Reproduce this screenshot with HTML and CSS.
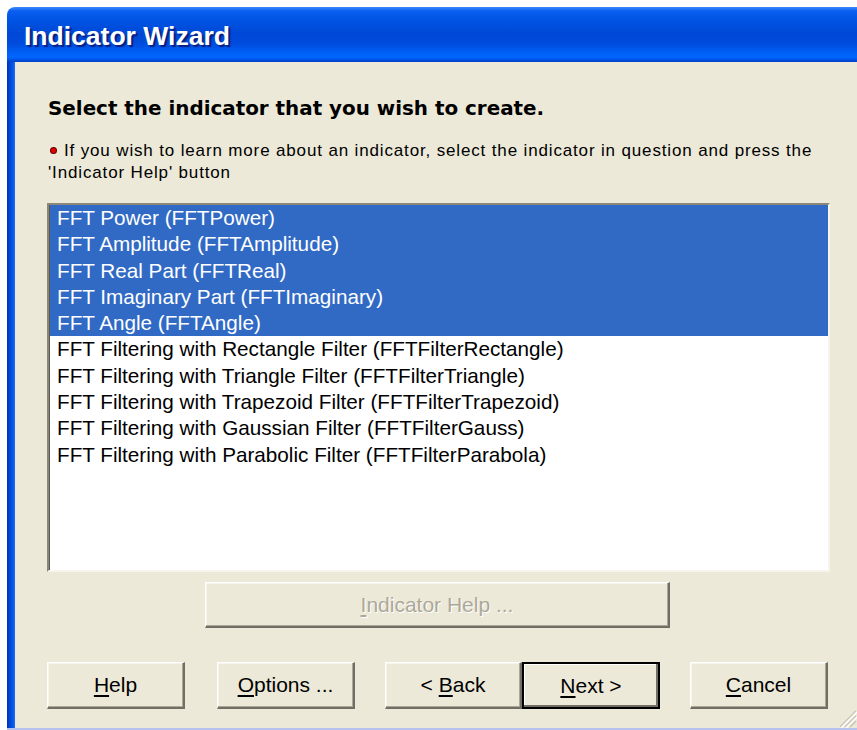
FILE: index.html
```html
<!DOCTYPE html>
<html lang="en">
<head>
<meta charset="utf-8">
<title>Indicator Wizard</title>
<link rel="stylesheet" href="styles.css">
</head>
<body>
<div class="window">
  <div class="titlebar"><span class="title">Indicator Wizard</span></div>
  <div class="frame">
    <div class="edge-left"></div>
    <div class="client">
      <h1 class="heading">Select the indicator that you wish to create.</h1>
      <div class="note">
        <span class="bullet"></span>
        <p>If you wish to learn more about an indicator, select the indicator in question and press the 'Indicator Help' button</p>
      </div>
      <ul class="listbox">
        <li class="sel">FFT Power (FFTPower)</li>
        <li class="sel">FFT Amplitude (FFTAmplitude)</li>
        <li class="sel">FFT Real Part (FFTReal)</li>
        <li class="sel">FFT Imaginary Part (FFTImaginary)</li>
        <li class="sel">FFT Angle (FFTAngle)</li>
        <li>FFT Filtering with Rectangle Filter (FFTFilterRectangle)</li>
        <li>FFT Filtering with Triangle Filter (FFTFilterTriangle)</li>
        <li>FFT Filtering with Trapezoid Filter (FFTFilterTrapezoid)</li>
        <li>FFT Filtering with Gaussian Filter (FFTFilterGauss)</li>
        <li>FFT Filtering with Parabolic Filter (FFTFilterParabola)</li>
      </ul>
      <div class="help-row">
        <button class="btn btn-wide" disabled><u>I</u>ndicator Help ...</button>
      </div>
      <div class="button-row">
        <button class="btn"><u>H</u>elp</button>
        <button class="btn"><u>O</u>ptions ...</button>
        <div class="pair">
          <button class="btn">&lt; <u>B</u>ack</button>
          <button class="btn btn-default"><u>N</u>ext &gt;</button>
        </div>
        <button class="btn"><u>C</u>ancel</button>
      </div>
      <svg class="grip" width="20" height="20" viewBox="0 0 20 20">
        <g stroke-width="1.5">
          <line x1="19" y1="3" x2="3" y2="19" stroke="#c8c4b4"/>
          <line x1="19" y1="8" x2="8" y2="19" stroke="#c8c4b4"/>
          <line x1="19" y1="13" x2="13" y2="19" stroke="#c8c4b4"/>
          <line x1="20" y1="4" x2="4" y2="20" stroke="#ffffff"/>
          <line x1="20" y1="9" x2="9" y2="20" stroke="#ffffff"/>
        </g>
      </svg>
    </div>
  </div>
  <div class="edge-bottom"></div>
</div>
</body>
</html>
```

FILE: styles.css
```css
html, body {
  margin: 0;
  padding: 0;
  background: #ffffff;
}

.window {
  margin: 7px 0 0 7px;
  width: 850px;
  height: 723px;
  border-top-left-radius: 8px;
  overflow: hidden;
  display: flex;
  flex-direction: column;
}

.titlebar {
  height: 55px;
  flex: none;
  background: linear-gradient(to bottom,
    #3d8bff 0px, #0a5ef0 4px, #0055e5 12px, #0048d6 26px,
    #004bdc 36px, #0060f6 46px, #0066ff 50px, #0050e0 53px, #0040c8 55px);
  display: flex;
  align-items: center;
  padding-left: 17px;
}

.title {
  font-family: "Liberation Sans", Arial, sans-serif;
  font-weight: bold;
  font-size: 26.5px;
  color: #ffffff;
  text-shadow: 2px 2px 1px #0a1f80;
  margin-top: 3px;
}

.frame {
  flex: 1;
  display: flex;
  min-height: 0;
}

.edge-left {
  width: 8px;
  flex: none;
  background: linear-gradient(to right, #0030b8 0px, #0048d8 3px, #0058ee 6px, #2a6cf0 8px);
}

.client {
  flex: 1;
  position: relative;
  background: #ece9d8;
  padding: 0 0 0 32px;
  display: flex;
  flex-direction: column;
}

.edge-bottom {
  height: 2px;
  flex: none;
  background: #b8c2ee;
}

.heading {
  margin: 34px 0 0 1px;
  font-family: "DejaVu Sans", Verdana, sans-serif;
  font-weight: bold;
  font-size: 19.9px;
  line-height: 26px;
  color: #000000;
}

.note {
  margin-top: 18px;
  position: relative;
  font-family: "Liberation Sans", Arial, sans-serif;
  font-size: 17px;
  letter-spacing: 0.85px;
  line-height: 22px;
  color: #000000;
}

.note p {
  margin: 0 0 0 1px;
  width: 775px;
  text-indent: 16px;
}

.bullet {
  position: absolute;
  left: 4px;
  top: 8px;
  width: 5px;
  height: 5px;
  border-radius: 50%;
  background: #e00000;
  box-shadow: 0 0 0 1px #600000;
}

.listbox {
  list-style: none;
  margin: 19px 0 0 0;
  padding: 0;
  width: 779px;
  height: 365px;
  background: #ffffff;
  border-style: solid;
  border-width: 2px;
  border-color: #8a877a #f6f4ec #f6f4ec #8a877a;
  box-shadow: inset 1px 1px 0 #5a584e;
  font-family: "Liberation Sans", Arial, sans-serif;
  font-size: 20.7px;
  line-height: 26.3px;
  color: #000000;
  overflow: hidden;
}

.listbox li {
  padding-left: 7px;
  margin-left: 1px;
  white-space: nowrap;
}

.listbox li.sel {
  background: #316ac5;
  color: #ffffff;
}

.help-row {
  margin-top: 10px;
  padding-left: 158px;
  display: flex;
}

.btn {
  font-family: "Liberation Sans", Arial, sans-serif;
  font-size: 21px;
  color: #000000;
  background: #ece9d8;
  width: 138px;
  height: 47px;
  padding: 0;
  margin: 0;
  border-style: solid;
  border-width: 1px 2px 2px 1px;
  border-color: #ffffff #716f64 #716f64 #ffffff;
  box-shadow: inset -1px -1px 0 #aca899, inset 1px 1px 0 #f6f4ec;
}

.btn u {
  text-decoration-thickness: 1.5px;
  text-underline-offset: 3px;
}

.btn-wide {
  width: 465px;
  height: 46px;
}

.btn[disabled] {
  color: #aca899;
  text-shadow: 1px 1px 0 #ffffff;
}

.btn-default {
  border: 2px solid #000000;
  box-shadow: inset -2px -2px 0 #716f64, inset 1px 1px 0 #ffffff;
}

.button-row {
  margin-top: 34px;
  display: flex;
  align-items: flex-start;
}

.button-row > .btn:nth-child(2) {
  margin-left: 32px;
}

.pair {
  display: flex;
  margin-left: 30px;
}

.pair .btn:first-child {
  width: 137px;
}

.pair + .btn {
  margin-left: 30px;
}

.grip {
  position: absolute;
  right: 0;
  bottom: 0;
}
```
